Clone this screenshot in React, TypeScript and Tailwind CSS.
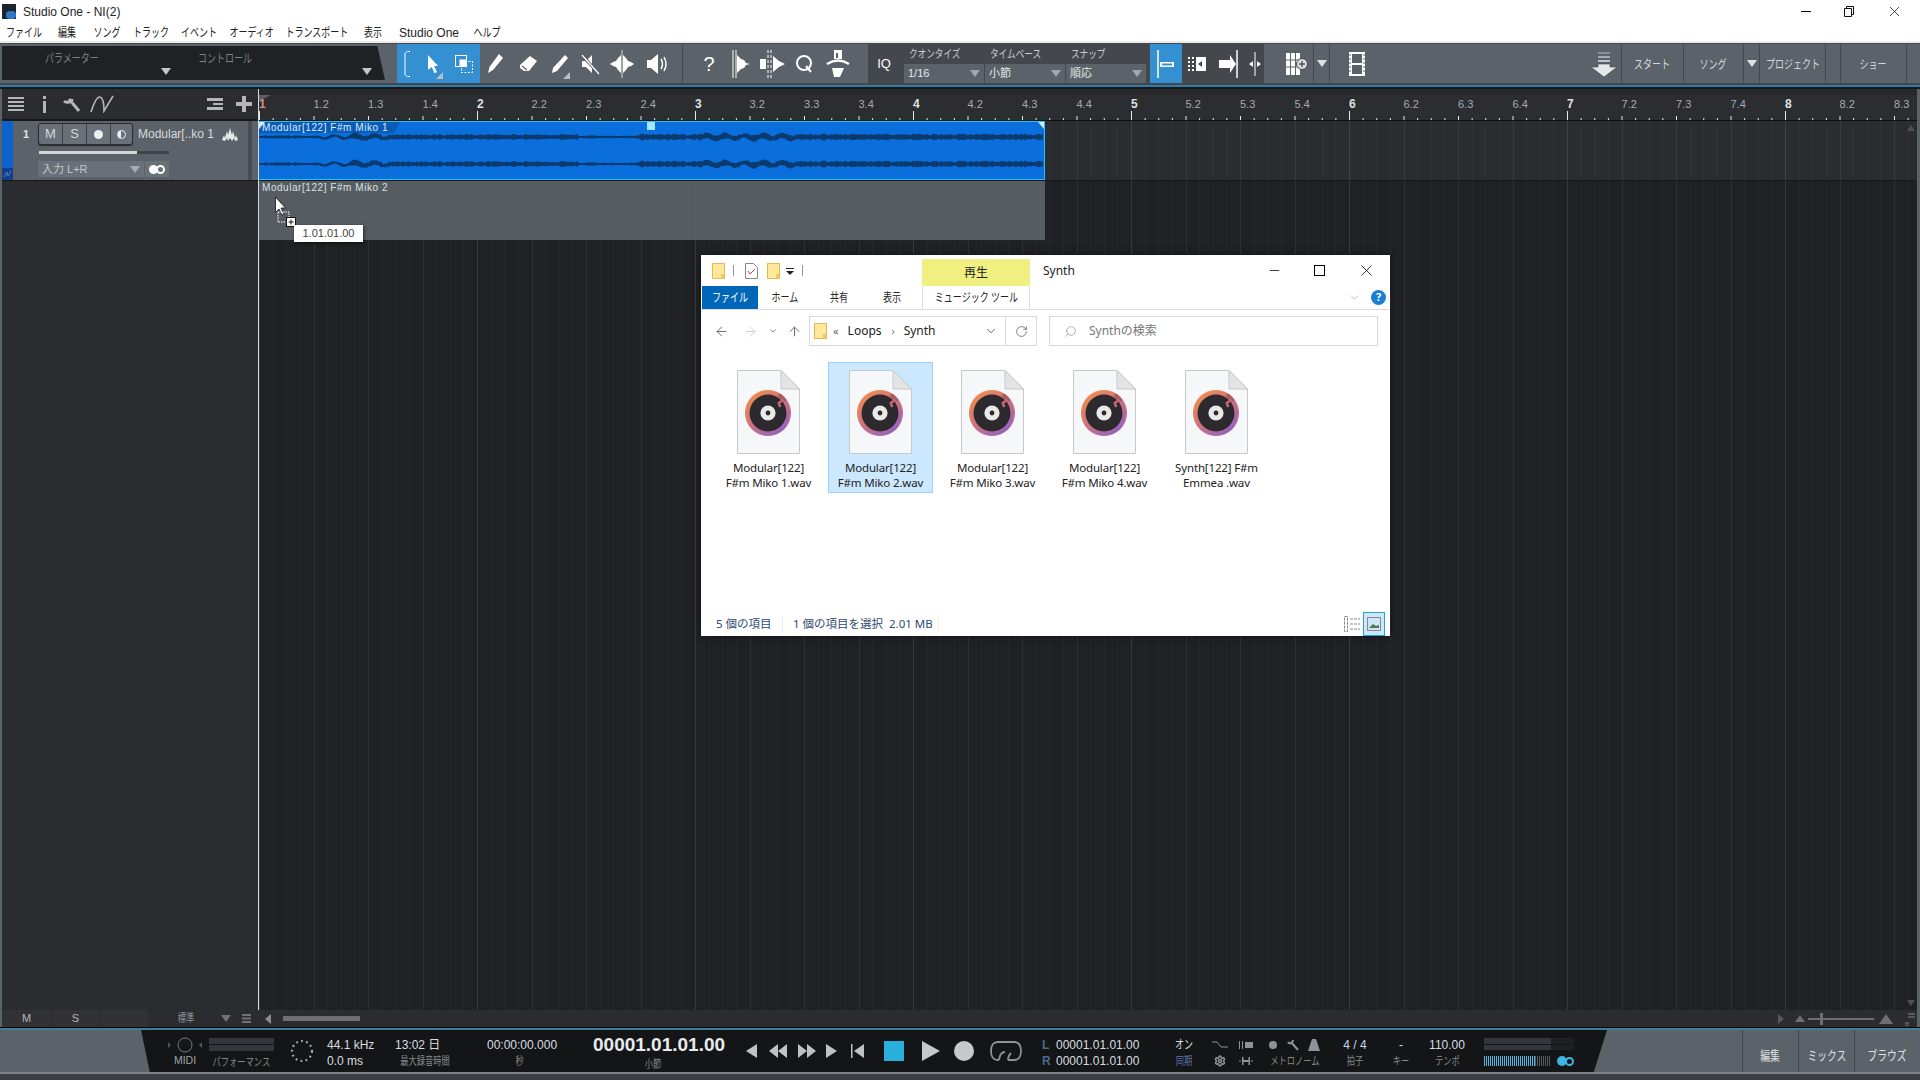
import clsx from 'clsx';
import { ArrowLeft, ArrowRight, ArrowUp, ChevronDown, RotateCw, Search, Minus, Settings, X } from 'lucide-react';

const menus = [
  ['ファイル', 'w-[34px]'],
  ['編集', 'w-[24px]'],
  ['ソング', 'w-[27px]'],
  ['トラック', 'w-[33px]'],
  ['イベント', 'w-[36px]'],
  ['オーディオ', 'w-[42px]'],
  ['トランスポート', 'w-[60px]'],
  ['表示', 'w-[24px]'],
];

const files = [
  ['Modular[122]', 'F#m Miko 1.wav'],
  ['Modular[122]', 'F#m Miko 2.wav'],
  ['Modular[122]', 'F#m Miko 3.wav'],
  ['Modular[122]', 'F#m Miko 4.wav'],
  ['Synth[122] F#m', 'Emmea .wav'],
];

const rulerCells: string[] = [];
for (let bar = 1; bar <= 8; bar++) {
  for (let beat = 1; beat <= 4; beat++) {
    if (bar === 8 && beat === 4) continue;
    rulerCells.push(beat === 1 ? String(bar) : `${bar}.${beat}`);
  }
}

// rough stand-in for the audio, two bands of noise
function wavePath(cy: number) {
  const top: string[] = [];
  const bottom: string[] = [];
  for (let x = 0; x <= 785; x += 2) {
    let env = 1;
    if (x > 90 && x < 320) env = 1.8;
    if (x >= 320 && x < 380) env = 1;
    if (x >= 380) env = 2;
    let wobble = 0;
    if (x > 60 && x < 130) wobble = Math.sin(x / 3.2) * 1.5;
    if (x > 440 && x < 540) wobble = Math.sin(x / 3) * 1.5;
    const noise = Math.abs(Math.sin(x * 12.9898) * 43758.5453) % 1;
    const a = env * 0.8 + noise * env * 0.9;
    top.push(`${x},${(cy + wobble - a).toFixed(1)}`);
    bottom.unshift(`${x},${(cy + wobble + a).toFixed(1)}`);
  }
  return `M${top.join('L')}L${bottom.join('L')}Z`;
}

function Cond({ text, className }: { text: string; className?: string }) {
  return (
    <div className={clsx('flex justify-center whitespace-nowrap', className)}>
      <span className="inline-block scale-x-75">{text}</span>
    </div>
  );
}

function Tri({ className }: { className?: string }) {
  return (
    <svg width="10" height="7" viewBox="0 0 10 7" className={className}>
      <path d="M0 0h10L5 7z" fill="currentColor" />
    </svg>
  );
}

function Ic({ w = 24, h = 24, children }: { w?: number; h?: number; children: React.ReactNode }) {
  return (
    <svg width={w} height={h} viewBox={`0 0 ${w} ${h}`} fill="#fff">
      {children}
    </svg>
  );
}

function Slot({ className, children }: { className: string; children?: React.ReactNode }) {
  return <div className={clsx('relative flex items-center justify-center h-full shrink-0', className)}>{children}</div>;
}

function Corner() {
  return <span className="absolute right-[4px] bottom-[4px] w-0 h-0 border-l-[7px] border-l-transparent border-b-[7px] border-b-[#b9bec3]" />;
}

function DropBox({ label, value }: { label: string; value: string }) {
  return (
    <div className="w-[81px] flex flex-col">
      <div className="h-[20px] pt-[2px] flex items-center text-[11.5px] text-[#c9ccd0] pl-[5px] whitespace-nowrap">
        <span className="inline-block scale-x-75 origin-left">{label}</span>
      </div>
      <div className="h-[19px] mr-[1px] bg-[#5c6269] flex items-center justify-between pl-[4px] pr-[4px] text-[11px] text-[#e6e8ea]">
        <span>{value}</span>
        <Tri className="text-[#a2a7ac]" />
      </div>
    </div>
  );
}

function Disc({ id }: { id: number }) {
  return (
    <svg width="63" height="84" viewBox="0 0 63 84">
      <defs>
        <linearGradient id={`ring${id}`} x1="0.1" y1="0" x2="0.8" y2="1">
          <stop offset="0" stopColor="#f68d45" />
          <stop offset="0.5" stopColor="#d2747a" />
          <stop offset="1" stopColor="#8f5fc4" />
        </linearGradient>
      </defs>
      <path d="M0.5 0.5H44L62.5 19V83.5H0.5Z" fill="#f6f7f9" stroke="#c8c8c8" />
      <path d="M44 0.5V19H62.5Z" fill="#e3e4e6" stroke="#c8c8c8" />
      <circle cx="31" cy="43" r="23" fill={`url(#ring${id})`} />
      <circle cx="31" cy="43" r="18.5" fill="#2c2a2e" />
      <path d="M41.5 24.8A21 21 0 0 1 48.2 31" fill="none" stroke="#a85a60" strokeWidth="3.5" />
      <path d="M46.7 29.7L41.7 33L43.3 37" fill="none" stroke="#c8686f" strokeWidth="2.4" />
      <circle cx="31" cy="43" r="7.6" fill="#e9e9e9" />
      <circle cx="31" cy="43" r="2.4" fill="#2c2a2e" />
    </svg>
  );
}

function Folder() {
  return (
    <svg width="13" height="16" viewBox="0 0 13 16">
      <path d="M0.5 0.5h12v15h-12z" fill="#ffe79b" stroke="#e2b94e" />
      <path d="M9 11h3.5v4.5H9z" fill="#eec766" />
    </svg>
  );
}

function TCol({ className, top, bottom, bottomClass }: { className: string; top: React.ReactNode; bottom: string; bottomClass?: string }) {
  return (
    <div className={clsx('shrink-0 flex flex-col pt-[7px] items-center', className)}>
      <div className="h-[16px] flex items-center text-[12px] text-[#d9dde0] whitespace-nowrap">{top}</div>
      <Cond text={bottom} className={clsx('h-[16px] items-center text-[11px] text-[#85898d]', bottomClass)} />
    </div>
  );
}

export default function App() {
  return (
    <div className="w-[1920px] h-[1080px] overflow-hidden relative flex flex-col bg-[#5c6269] [font-family:'Liberation_Sans','Noto_Sans_CJK_JP',sans-serif]">
      {/* Title + menu */}
      <div className="h-[41px] bg-white shrink-0">
        <div className="h-[23px] flex items-center">
          <div className="w-[14px] h-[15px] ml-[2px] bg-[#1c2430] relative overflow-hidden">
            <span className="absolute left-[4px] top-[7px] w-[10px] h-[8px] rounded-full bg-[#2f78c8]" />
          </div>
          <span className="ml-[7px] text-[12px] text-[#222]">Studio One - NI(2)</span>
          <div className="flex-1" />
          <div className="w-[10px] h-[1px] bg-black mr-[33px]" />
          <svg className="mr-[32px]" width="10" height="11" viewBox="0 0 10 11" fill="none" stroke="#111"><path d="M.5 2.500h7v8h-7zM2.500 2.500v-2h7v8h-2" /></svg>
          <X size={17} strokeWidth={1} className="text-black mr-[17px]" />
        </div>
        <div className="h-[18px] pt-[1px] pl-[7px] flex items-center gap-[14px] text-[12px] text-[#222]">
          {menus.map(([label, w]) => (
            <Cond key={label} text={label} className={w} />
          ))}
          <span className="w-[60px] whitespace-nowrap">Studio One</span>
          <Cond text="ヘルプ" className="w-[28px]" />
        </div>
      </div>
      <div className="h-[2px] bg-[#ececec] shrink-0" />

      {/* Toolbar */}
      <div className="h-[40px] shrink-0 flex bg-[#5c6269] border-t border-[#44484d]">
        <div className="ml-[2px] mt-[2px] h-[34px] w-[383px] shrink-0 flex bg-[#1f2124] text-[#7c8085] text-[12px] [clip-path:polygon(0_0,98%_0,100%_100%,0_100%)]">
          <div className="w-[182px] flex flex-col justify-between pt-[4px] pb-[5px]">
            <Cond text="パラメーター" className="w-[140px]" />
            <Tri className="self-end mr-[13px] text-[#c4c7ca]" />
          </div>
          <div className="w-[201px] flex flex-col justify-between pt-[4px] pb-[5px]">
            <Cond text="コントロール" className="w-[82px]" />
            <Tri className="self-end mr-[13px] text-[#c4c7ca]" />
          </div>
        </div>
        <div className="ml-[12px] w-[83px] shrink-0 flex bg-[#3490d0]">
          <Slot className="w-[22px]">
            <svg width="8" height="26" viewBox="0 0 8 26" fill="none" stroke="#fff"><path d="M6 .500H3L1 2.500v21l2 2h3" /></svg>
          </Slot>
          <Slot className="w-[28px]">
            <Ic w={14} h={20}><path d="M2 1l10 11H8l3 6-2.500 1.200L5.800 13 2 16z" /></Ic>
            <Corner />
          </Slot>
          <Slot className="w-[33px]">
            <svg width="20" height="20" viewBox="0 0 20 20" fill="none" stroke="#fff"><rect x="1.500" y="1.500" width="11" height="11" /><rect x="7.500" y="7.500" width="11" height="11" strokeDasharray="2 1.500" /><rect x="6" y="6" width="6" height="6" fill="#fff" /></svg>
          </Slot>
        </div>
        <Slot className="w-[30px]">
          <Ic w={18} h={22}><path d="M13 1l4 4L7 17l-5 3 1.500-6z" /></Ic>
        </Slot>
        <Slot className="w-[36px]">
          <Ic w={20} h={20}><path d="M12 2l7 5-8 10H6l-4-3v-3z" /><path d="M4 12l5 4" stroke="#5c6269" strokeWidth="1.200" /></Ic>
        </Slot>
        <Slot className="w-[28px]">
          <Ic w={18} h={22}><path d="M14 2l3 3L6 18l-5 2 1-5z" /></Ic>
          <Corner />
        </Slot>
        <Slot className="w-[32px]">
          <Ic w={20} h={22}><path d="M2 8h4l6-6v18l-6-6H2z" /><path d="M1 1l18 20" stroke="#5c6269" strokeWidth="3" /><path d="M2 2l17 19" stroke="#fff" strokeWidth="1.200" /></Ic>
        </Slot>
        <Slot className="w-[32px]">
          <Ic w={26} h={28}>
            <path d="M12 5l-3 3-2 3-3 1-3 2 3 2 3 1 2 3 3 3zM14 5l3 3 2 3 3 1 3 2-3 2-3 1-2 3-3 3z" />
            <path d="M13 0v28" stroke="#5c6269" strokeWidth="1.800" />
            <path d="M13 0v28" stroke="#fff" strokeWidth=".8" />
          </Ic>
        </Slot>
        <Slot className="w-[36px]">
          <Ic w={22} h={22}><path d="M2 7h4l7-6v20l-7-6H2z" /><path d="M16 6q3 5 0 10M19 4q4 7 0 14" fill="none" stroke="#fff" strokeWidth="1.500" /></Ic>
        </Slot>
        <div className="ml-[8px] border-l border-[#44484d]" />
        <Slot className="w-[28px] ml-[12px] text-[20px] text-white">?</Slot>
        <Slot className="w-[36px]">
          <Ic w={20} h={28}><path d="M2 0v28M5 0v28" stroke="#fff" strokeWidth="1" /><path d="M6 5l4 4 3 1 2 3 4 1-4 1-2 3-3 1-4 4z" /></Ic>
        </Slot>
        <Slot className="w-[28px]">
          <Ic w={26} h={28}><path d="M0 9h6v10H0z" /><path d="M8 0v28M11 0v28" stroke="#fff" strokeDasharray="3 2" /><path d="M13 6l6 5 6 3-6 3-6 5z" /></Ic>
        </Slot>
        <Slot className="w-[34px]">
          <svg width="18" height="20" viewBox="0 0 18 20" fill="none" stroke="#fff" strokeWidth="2"><circle cx="9" cy="9" r="7" /><path d="M11 12l5 6" /></svg>
        </Slot>
        <Slot className="w-[34px]">
          <Ic w={24} h={30}><path d="M8 1h8v9H8z" /><path d="M10 4h2v5h-2z" fill="#5c6269" /><path d="M1 15q11-7 22 0" fill="none" stroke="#fff" strokeWidth="2.600" /><path d="M6 19h12l-4 9H8z" /></Ic>
        </Slot>
        <div className="ml-[13px] w-[396px] shrink-0 flex bg-[#44484d]">
          <Slot className="w-[32px] text-[13px] text-white">IQ</Slot>
          <div className="ml-[4px] flex">
            <DropBox label="クオンタイズ" value="1/16" />
            <DropBox label="タイムベース" value="小節" />
            <DropBox label="スナップ" value="順応" />
          </div>
          <Slot className="w-[32px] ml-[3px] bg-[#3490d0]">
            <Ic w={18} h={28}><path d="M1 0v28" stroke="#fff" strokeWidth="1.500" /><path d="M3 12h14v5H3z" /><path d="M5 13.500h10v2H5z" fill="#3490d0" /></Ic>
          </Slot>
          <Slot className="w-[30px]">
            <Ic w={18} h={14}><path d="M0 0h2v2H0zM0 4h2v2H0zM0 8h2v2H0zM0 12h2v2H0zM4 0h2v2H4zM4 4h2v2H4zM4 8h2v2H4zM4 12h2v2H4z" /><path d="M8 0h10v14H8z" /><path d="M14 4v6l-4-3z" fill="#44484d" /></Ic>
          </Slot>
          <Slot className="w-[34px]">
            <Ic w={20} h={28}><path d="M0 10h11V5l6 9-6 9v-5H0z" /><path d="M18 0v28" stroke="#fff" strokeWidth="1.500" /></Ic>
          </Slot>
          <Slot className="w-[18px]">
            <Ic w={12} h={24}><path d="M6 0v24" stroke="#fff" /><path d="M0 12l4-3v6zM12 12l-4-3v6z" /></Ic>
          </Slot>
        </div>
        <Slot className="w-[32px] ml-[17px]">
          <svg width="22" height="22" viewBox="0 0 22 22"><path d="M0 0h14v22H0z" fill="#fff" /><path d="M4.500 0v22M9.500 0v22M0 7h14M0 14h14" stroke="#5c6269" /><circle cx="16" cy="11" r="5.500" fill="#d8dadc" stroke="#44484d" /><path d="M13 11h6M16 8v6" stroke="#222" /></svg>
        </Slot>
        <div className="border-l border-[#44484d]" />
        <Slot className="w-[15px]"><Tri className="text-[#dfe1e3]" /></Slot>
        <div className="border-l border-[#44484d]" />
        <Slot className="w-[54px]">
          <svg width="16" height="24" viewBox="0 0 16 24"><path d="M0 0h16v24H0z" fill="#fff" /><path d="M3 2h10v9H3zM3 13h10v9H3z" fill="#5c6269" /><path d="M1 2v20M15 2v20" stroke="#5c6269" strokeDasharray="2 2" /></svg>
        </Slot>
        <div className="flex-1" />
        <Slot className="w-[34px]">
          <svg width="28" height="26" viewBox="0 0 28 26"><path d="M8 1h12v2H8z" fill="#8d9196" /><path d="M8 5h12v2H8z" fill="#a6aaae" /><path d="M8 9h12v2H8z" fill="#bfc2c5" /><path d="M8 13h12v3h7L14 26 1 16h7z" fill="#e6e7e8" stroke="#44484d" strokeWidth=".6" /></svg>
        </Slot>
        <div className="border-l border-[#44484d]" />
        <Slot className="w-[61px] pt-[2px] text-[12px] text-[#d6d9dc]"><Cond text="スタート" /></Slot>
        <div className="border-l border-[#44484d]" />
        <Slot className="w-[59px] pt-[2px] text-[12px] text-[#d6d9dc]"><Cond text="ソング" /></Slot>
        <div className="border-l border-[#44484d]" />
        <Slot className="w-[15px]"><Tri className="text-[#dfe1e3]" /></Slot>
        <div className="border-l border-[#44484d]" />
        <Slot className="w-[65px] pt-[2px] text-[12px] text-[#d6d9dc]"><Cond text="プロジェクト" /></Slot>
        <div className="border-l border-[#44484d]" />
        <Slot className="w-[14px]" />
        <div className="border-l border-[#44484d]" />
        <Slot className="w-[65px] pt-[2px] text-[12px] text-[#d6d9dc]"><Cond text="ショー" /></Slot>
        <div className="border-l border-[#44484d] w-[14px]" />
      </div>
      <div className="h-[2px] bg-[#44484d] shrink-0" />
      <div className="h-[2px] bg-[#2f7da6] shrink-0" />
      <div className="h-[2px] bg-[#17181a] shrink-0" />

      {/* Arrange */}
      <div className="h-[921px] shrink-0 flex ml-[2px] mr-[3px] bg-[#1f2124]">
        <div className="w-[256px] shrink-0 flex flex-col bg-[#2a2c30]">
          <div className="h-[32px] flex items-center border-b-2 border-[#17181a] text-[#b4b7ba]">
            <svg className="ml-[6px]" width="16" height="14" viewBox="0 0 16 14" fill="#b4b7ba"><path d="M0 0h16v2H0zM0 4h16v2H0zM0 8h16v2H0zM0 12h16v2H0z" /></svg>
            <svg className="ml-[18px]" width="5" height="17" viewBox="0 0 5 17" fill="#b4b7ba"><path d="M1 0h3v3H1zM1 5h3v12H1z" /></svg>
            <svg className="ml-[16px]" width="18" height="17" viewBox="0 0 18 17" fill="none" stroke="#b4b7ba" strokeWidth="3"><path d="M6 3l10 12M1 5q2 2 5 1t3-3" /></svg>
            <svg className="ml-[9px]" width="24" height="18" viewBox="0 0 24 18" fill="none" stroke="#b4b7ba" strokeWidth="1.600"><path d="M1 17Q6 1 10 2t4 14Q17 11 23 1" /></svg>
            <div className="flex-1" />
            <svg width="16" height="14" viewBox="0 0 16 14" fill="#b4b7ba"><path d="M0 1h16v3H0zM6 6h10v2H6zM0 10h16v3H0z" /></svg>
            <svg className="ml-[13px] mr-[6px]" width="16" height="16" viewBox="0 0 16 16" fill="#b4b7ba"><path d="M6 0h4v6h6v4h-6v6H6v-6H0V6h6z" /></svg>
          </div>
          <div className="h-[60px] flex border-b border-[#17181a]">
            <div className="w-[11px] flex flex-col bg-[#0a63cf]">
              <div className="flex-1" />
              <div className="h-[12px] bg-[#14408a] text-[#4f7fc8]">
                <svg width="11" height="12" viewBox="0 0 11 12" fill="none" stroke="currentColor"><path d="M2 9l3-5 1 4 3-5" /></svg>
              </div>
            </div>
            <div className="w-[235px] bg-[#5c6269] relative pt-[2px]">
              <div className="flex items-center h-[22px]">
                <span className="w-[25px] pl-[1px] text-center text-[11px] font-bold text-[#e2e4e6]">1</span>
                <div className="w-[95px] h-[22px] flex rounded-[3px] border border-[#2b2d30] bg-[#6a7077] text-[#d5d8da] text-[13px] shadow-[0_1px_1px_#2b2d30]">
                  <span className="w-[23px] flex items-center justify-center">M</span>
                  <span className="w-[24px] flex items-center justify-center border-l border-[#3e4146]">S</span>
                  <span className="w-[24px] flex items-center justify-center border-l border-[#3e4146]"><span className="w-[9px] h-[9px] rounded-full bg-[#eceeef]" /></span>
                  <span className="flex-1 flex items-center justify-center border-l border-[#3e4146]"><span className="w-[9px] h-[9px] rounded-full bg-[linear-gradient(90deg,#eceeef_50%,#6a7077_50%)] border border-[#eceeef]" /></span>
                </div>
                <span className="ml-[5px] text-[12px] text-[#d8dbdd] whitespace-nowrap">Modular[..ko 1</span>
                <svg className="ml-[8px]" width="16" height="13" viewBox="0 0 16 13" fill="#e6e8e9"><path d="M0 12l2-5 1 3 2-7 1 4 2-7 2 7 1-4 2 7 1-3 2 5-3 1-1-3-2 3-2-3-2 3-1-3-2 3z" /></svg>
              </div>
              <div className="ml-[26px] mt-[6px] w-[130px] h-[3px] bg-[#3f4347]">
                <div className="w-[98px] h-full bg-[#d4d6d8]" />
              </div>
              <div className="ml-[25px] mt-[7px] flex gap-[1px]">
                <div className="w-[106px] h-[16px] bg-[#6a7077] flex items-center justify-between pl-[4px] pr-[4px] text-[11px] text-[#c5c8cb]">
                  <span>入力 L+R</span>
                  <Tri className="text-[#a9adb1]" />
                </div>
                <div className="w-[24px] h-[16px] bg-[#6a7077] flex items-center justify-center">
                  <span className="w-[9px] h-[9px] rounded-full bg-white" />
                  <span className="w-[9px] h-[9px] -ml-[2px] rounded-full border-2 border-white" />
                </div>
              </div>
            </div>
            <div className="flex-1 flex">
              <div className="w-[4px] bg-[#484c51]" />
              <div className="flex-1 bg-[#5c6269]" />
            </div>
          </div>
        </div>

        <div className="flex-1 flex flex-col relative border-l border-[#d6d8da] overflow-hidden">
          {/* Ruler */}
          <div className="h-[32px] shrink-0 relative bg-[#2b2d31] overflow-hidden">
            <div className="h-[6px] bg-[#26282b]" />
            <span className="absolute left-0 top-[6px] w-0 h-0 border-t-[6px] border-t-[#5c6065] border-r-[12px] border-r-transparent" />
            <div className="flex h-[18px] items-center relative">
              {rulerCells.map((c, i) => (
                <span
                  key={c}
                  className={clsx(
                    'shrink-0 w-[54.5px] whitespace-nowrap',
                    i % 4 === 0 ? 'text-[12px] font-bold' : 'text-[11px] text-[#a8abaf]',
                    i === 0 ? 'text-[#d98b8b]' : i % 4 === 0 && 'text-[#dfe1e3]',
                  )}
                >
                  {c}
                </span>
              ))}
            </div>
            <svg className="absolute left-0 bottom-0" width="1660" height="10" stroke="#e8e9ea">
              {Array.from({ length: 122 }, (_, i) => {
                const x = i * 13.625 + 0.5;
                const h = i % 16 === 0 ? 9 : i % 4 === 0 ? 4 : 2;
                return <line key={i} x1={x} x2={x} y1={9 - h} y2={9} />;
              })}
              <line x1="0" x2="1660" y1="9.500" y2="9.500" stroke="#101112" />
            </svg>
          </div>

          {/* Lanes */}
          <div className="flex-1 flex flex-col bg-[repeating-linear-gradient(90deg,#36393d_0,#36393d_1px,transparent_1px,transparent_218px),repeating-linear-gradient(90deg,#2e3034_0,#2e3034_1px,transparent_1px,transparent_54.5px),repeating-linear-gradient(90deg,#26282b_0,#26282b_1px,transparent_1px,transparent_13.625px)]">
            <div className="h-[60px] shrink-0 flex border-b border-[#17181a]">
              <div className="w-[786px] shrink-0 relative bg-[#0a6fdc] border-y border-[#25c3f5] border-r">
                <div className="w-[141px] h-[11px] flex items-center pl-[3px] bg-[#0a5bb6] text-[10px] tracking-[0.55px] text-[#d9ecff] whitespace-nowrap [clip-path:polygon(0_0,100%_0,96%_100%,0_100%)]">
                  Modular[122] F#m Miko 1
                </div>
                <span className="absolute left-0 top-0 w-0 h-0 border-t-[7px] border-t-[#cdeeff] border-r-[6px] border-r-transparent" />
                <span className="absolute left-[388px] top-0 w-[8px] h-[8px] bg-[#a5e6ff]" />
                <span className="absolute right-0 top-0 w-0 h-0 border-t-[7px] border-t-[#cdeeff] border-l-[6px] border-l-transparent" />
                <svg className="absolute left-0 top-0" width="785" height="58">
                  <path d={wavePath(15)} fill="#0b3a6e" />
                  <path d={wavePath(42)} fill="#0b3a6e" />
                </svg>
              </div>
              <div className="flex-1 bg-white/5" />
            </div>
            <div className="w-[786px] h-[59px] shrink-0 bg-[#5a6066]/95 pl-[3px] text-[10px] tracking-[0.55px] text-[#dfe2e4] leading-[14px]">
              Modular[122] F#m Miko 2
            </div>
          </div>

          {/* Scroll arrows */}
          <span className="absolute right-[2px] top-[36px] w-0 h-0 border-x-[4px] border-x-transparent border-b-[6px] border-b-[#4c5054]" />
          <span className="absolute right-[2px] bottom-[4px] w-0 h-0 border-x-[4px] border-x-transparent border-t-[6px] border-t-[#4c5054]" />
        </div>
      </div>

      {/* Arrange footer */}
      <div className="h-[17px] shrink-0 flex items-center ml-[2px] mr-[3px] bg-[#2a2c30] text-[11px] text-[#b4b7ba]">
        <div className="w-[146px] h-full flex items-center bg-[#303236]">
          <span className="w-[49px] text-center">M</span>
          <span className="w-[49px] h-full flex items-center justify-center border-x border-[#26282b]">S</span>
        </div>
        <Cond text="標準" className="w-[76px] text-[#8e9195]" />
        <Tri className="ml-[-3px] text-[#6f7377]" />
        <svg className="ml-[11px]" width="9" height="9" viewBox="0 0 9 9" fill="#6f7377"><path d="M0 0h9v2H0zM0 3.500h9v2H0zM0 7h9v2H0z" /></svg>
        <span className="ml-[14px] w-0 h-0 border-y-[5px] border-y-transparent border-r-[6px] border-r-[#8a8d91]" />
        <div className="ml-[12px] w-[77px] h-[5px] bg-[#6c6f73]" />
        <div className="flex-1" />
        <span className="w-0 h-0 border-y-[5px] border-y-transparent border-l-[6px] border-l-[#55585c]" />
        <span className="ml-[11px] w-0 h-0 border-x-[5px] border-x-transparent border-b-[7px] border-b-[#6c6f73]" />
        <div className="ml-[3px] w-[66px] h-[2px] bg-[#6c6f73] relative">
          <span className="absolute left-[12px] top-[-5px] w-[3px] h-[12px] bg-[#6c6f73]" />
        </div>
        <span className="ml-[5px] w-0 h-0 border-x-[7px] border-x-transparent border-b-[10px] border-b-[#6c6f73]" />
        <svg className="ml-[12px] mr-[2px]" width="10" height="14" viewBox="0 0 10 14" fill="#55585c"><path d="M3 1h7v2H3zM3 4h7v2H3zM0 10h4v2H0zM0 12.500h4V14H0z" /></svg>
      </div>
      <div className="h-[1px] bg-black shrink-0" />
      <div className="h-[2px] bg-[#3d7f9f] shrink-0" />

      {/* Transport */}
      <div className="h-[42px] shrink-0 flex bg-[#5c6269]">
        <div className="ml-[141px] w-[1466px] shrink-0 flex bg-[#141516] [clip-path:polygon(0_0,100%_0,99.1%_100%,0.6%_100%)]">
          <div className="ml-[24px] w-[40px] shrink-0 flex flex-col items-center pt-[7px]">
            <svg width="40" height="16" viewBox="0 0 40 16" fill="none" stroke="#777b80">
              <circle cx="20" cy="8" r="7" />
              <path d="M3 5l3 3-3 3zM37 5l-3 3 3 3z" fill="#4f5357" stroke="none" />
              <path d="M16 8h.1M24 8h.1M20 5h.1M17.500 6h.1M22.500 6h.1" strokeWidth="2" />
            </svg>
            <span className="h-[16px] flex items-center text-[10.5px] text-[#9fa3a7]">MIDI</span>
          </div>
          <div className="ml-[4px] w-[65px] shrink-0 flex flex-col pt-[8px]">
            <div className="h-[6px] bg-[#33363a]" />
            <div className="h-[6px] mt-[1px] bg-[#33363a]" />
            <Cond text="パフォーマンス" className="mt-[4px] h-[14px] items-center text-[11px] text-[#85898d]" />
          </div>
          <div className="ml-[10px] w-[36px] shrink-0 flex items-center justify-center">
            <svg width="24" height="24" viewBox="0 0 24 24" fill="none" stroke="#a9adb1" strokeWidth="2.200" strokeDasharray="1.800 3.300"><circle cx="12" cy="12" r="10" /></svg>
          </div>
          <div className="ml-[7px] w-[68px] shrink-0 flex flex-col pt-[7px] text-[12px] text-[#d9dde0]">
            <div className="h-[16px] flex items-center">44.1 kHz</div>
            <div className="h-[16px] flex items-center">0.0 ms</div>
          </div>
          <TCol className="w-[92px] !items-start" top="13:02 日" bottom="最大録音時間" bottomClass="w-[60px]" />
          <TCol className="w-[106px] !items-start" top="00:00:00.000" bottom="秒" bottomClass="w-[64px]" />
          <div className="w-[140px] shrink-0 flex flex-col pt-[5px]">
            <div className="h-[20px] flex items-center text-[19px] font-bold text-[#e8ebee] whitespace-nowrap">00001.01.01.00</div>
            <Cond text="小節" className="w-[20px] ml-[50px] mt-[2px] h-[14px] items-center text-[11px] text-[#85898d]" />
          </div>

          <div className="ml-[7px] w-[22px] shrink-0 flex items-center justify-center">
            <svg width="11" height="14" viewBox="0 0 11 14" fill="#bfc2c5"><path d="M11 0v14L0 7z" /></svg>
          </div>
          <div className="w-[31px] shrink-0 flex items-center justify-center">
            <svg width="18" height="14" viewBox="0 0 18 14" fill="#bfc2c5"><path d="M9 0v14L0 7zM18 0v14L9 7z" /></svg>
          </div>
          <div className="w-[28px] shrink-0 flex items-center justify-center">
            <svg width="18" height="14" viewBox="0 0 18 14" fill="#bfc2c5"><path d="M0 0v14l9-7zM9 0v14l9-7z" /></svg>
          </div>
          <div className="w-[20px] shrink-0 flex items-center justify-center">
            <svg width="11" height="14" viewBox="0 0 11 14" fill="#bfc2c5"><path d="M0 0v14l11-7z" /></svg>
          </div>
          <div className="w-[32px] shrink-0 flex items-center justify-center">
            <svg width="13" height="14" viewBox="0 0 13 14" fill="#bfc2c5"><path d="M0 0h1.500v14H0zM13 0v14L3 7z" /></svg>
          </div>
          <div className="ml-[11px] w-[20px] h-[20px] mt-[11px] shrink-0 bg-[#2ab0dc]" />
          <div className="ml-[18px] w-[18px] shrink-0 flex items-center">
            <svg width="18" height="20" viewBox="0 0 18 20" fill="#c6c9cb"><path d="M0 0l18 10L0 20z" /></svg>
          </div>
          <div className="ml-[14px] w-[20px] h-[20px] mt-[11px] shrink-0 rounded-full bg-[#c6c9cb]" />
          <div className="ml-[16px] w-[32px] shrink-0 flex items-center">
            <svg width="32" height="20" viewBox="0 0 32 20" fill="none" stroke="#8f9397" strokeWidth="1.800"><path d="M9 19H8Q1 19 1 10t7-9h16q7 0 7 9t-7 9h-6M9 19q1-8 6-8M18 19q0-4 3-7" /></svg>
          </div>

          <div className="ml-[20px] w-[14px] shrink-0 flex flex-col pt-[7px] text-[12px] font-bold text-[#4a6c8e]">
            <div className="h-[16px] flex items-center">L</div>
            <div className="h-[16px] flex items-center">R</div>
          </div>
          <div className="w-[90px] shrink-0 flex flex-col pt-[7px] text-[12px] text-[#d9dde0]">
            <div className="h-[16px] flex items-center">00001.01.01.00</div>
            <div className="h-[16px] flex items-center">00001.01.01.00</div>
          </div>
          <TCol className="ml-[18px] w-[40px]" top={<Cond text="オン" />} bottom="同期" bottomClass="!text-[#5a74b0]" />
          <div className="ml-[3px] w-[52px] shrink-0 grid grid-cols-2 pt-[7px] auto-rows-[16px] place-items-center">
            <svg width="16" height="8" viewBox="0 0 16 8" fill="none" stroke="#8f9397"><path d="M0 1h5l4 5h7" /></svg>
            <svg width="14" height="8" viewBox="0 0 14 8" fill="#8f9397"><path d="M0 0h1v8H0zM3 0h1v8H3zM6 1h8v6H6z" /></svg>
            <Settings size={12} strokeWidth={3} className="text-[#8f9397]" />
            <svg width="14" height="8" viewBox="0 0 14 8" fill="#8f9397"><path d="M0 4h2M12 4h2" stroke="#8f9397" /><path d="M3 0h1.500v8H3zM9.500 0H11v8H9.500zM4 3h6v2H4z" /></svg>
          </div>
          <div className="w-[71px] shrink-0 flex flex-col pt-[7px]">
            <div className="h-[16px] flex items-center justify-between pl-[10px] pr-[10px]">
              <span className="w-[8px] h-[8px] rounded-full bg-[#8f9397]" />
              <svg width="12" height="12" viewBox="0 0 12 12" fill="none" stroke="#8f9397" strokeWidth="2"><path d="M4 3l7 8M1 3q1 2 3 1t2-3" /></svg>
              <svg width="12" height="12" viewBox="0 0 12 12" fill="#8f9397"><path d="M4 0h4l4 12H0z" /></svg>
            </div>
            <Cond text="メトロノーム" className="h-[16px] items-center text-[11px] text-[#85898d]" />
          </div>
          <TCol className="w-[50px]" top={<span className="text-[#c2dcec]">4 / 4</span>} bottom="拍子" />
          <TCol className="w-[42px]" top="-" bottom="キー" />
          <TCol className="w-[50px]" top="110.00" bottom="テンポ" />
          <div className="ml-[12px] w-[90px] shrink-0 flex flex-col pt-[8px]">
            <div className="h-[6px] bg-[linear-gradient(90deg,#33363a_75%,#1e2022_75%)]" />
            <div className="h-[5px] mt-[1px] bg-[linear-gradient(90deg,#33363a_75%,#1e2022_75%)]" />
            <div className="mt-[6px] h-[10px] flex items-center">
              <div className="w-[67px] h-full bg-[repeating-linear-gradient(90deg,#56b6e4_0,#56b6e4_1px,#141516_1px,#141516_2px)]" />
              <div className="w-[15px] -ml-[15px] h-full bg-[repeating-linear-gradient(90deg,#55585c_0,#55585c_1px,#141516_1px,#141516_2px)]" />
              <span className="ml-[7px] w-[10px] h-[10px] rounded-full bg-[#3db4e4]" />
              <span className="-ml-[2px] w-[9px] h-[9px] rounded-full border-2 border-[#3db4e4]" />
            </div>
          </div>
        </div>
        <div className="flex-1 flex justify-end text-[13px] text-[#e0e2e4]">
          <Slot className="w-[56px] pt-[9px] border-l border-[#44484d]"><Cond text="編集" /></Slot>
          <Slot className="w-[56px] pt-[9px] border-l border-[#44484d]"><Cond text="ミックス" /></Slot>
          <Slot className="w-[66px] pt-[9px] border-l border-[#44484d]"><Cond text="ブラウズ" /></Slot>
        </div>
      </div>
      <div className="flex-1 border-t-2 border-[#7e8287] bg-[#3c3f43]" />

      {/* Drag cursor */}
      <svg className="absolute left-[274px] top-[196px]" width="24" height="32" viewBox="0 0 24 32">
        <path d="M1.500 1l10 11H7l3 6-2 1-3-6-3.500 3.500z" fill="#fff" stroke="#111" strokeWidth=".8" />
        <rect x="4" y="16" width="11" height="10" fill="none" stroke="#fff" strokeDasharray="1.500 1" />
        <rect x="12.500" y="21.500" width="9" height="9" fill="#fff" stroke="#111" />
        <path d="M14.500 26h5M17 23.500v5" stroke="#111" />
      </svg>
      <div className="absolute left-[294px] top-[225px] w-[69px] h-[17px] bg-white flex items-center justify-center text-[11px] text-[#444] shadow-[1px_1px_3px_rgba(0,0,0,0.6)]">
        1.01.01.00
      </div>

      {/* Explorer window */}
      <div className="absolute left-[701px] top-[255px] w-[689px] h-[381px] bg-white flex flex-col text-[#222] text-[12px] [font-family:'Noto_Sans','Noto_Sans_CJK_JP',sans-serif] shadow-[0_0_6px_rgba(0,0,0,0.5)]">
        <div className="h-[31px] shrink-0 flex items-center">
          <div className="ml-[11px] flex items-center">
            <Folder />
            <span className="ml-[8px] w-[1px] h-[11px] bg-[#999]" />
            <svg className="ml-[11px]" width="13" height="16" viewBox="0 0 13 16" fill="none"><path d="M.5.500h8l4 4v11H.5z" fill="#fff" stroke="#888" /><path d="M3 8l2 3 5-5" stroke="#e0402a" /></svg>
            <span className="ml-[9px]"><Folder /></span>
            <svg className="ml-[6px]" width="8" height="8" viewBox="0 0 8 8" fill="#222"><path d="M0 1h8v1H0zM0 4h8L4 8z" /></svg>
            <span className="ml-[8px] w-[1px] h-[11px] bg-[#999]" />
          </div>
          <div className="ml-[119px] w-[108px] h-[27px] mt-[4px] bg-[#f0f080] flex items-center justify-center text-[12px]">再生</div>
          <span className="ml-[13px] text-[12px] text-[#222]">Synth</span>
          <div className="flex-1" />
          <Minus size={15} strokeWidth={1.200} className="mr-[32px] text-black" />
          <div className="w-[11px] h-[11px] border border-black mr-[32px]" />
          <X size={19} strokeWidth={1} className="mr-[14px] text-black" />
        </div>
        <div className="h-[23px] shrink-0 flex items-center border-b border-[#dcdcdc] box-content">
          <div className="ml-[1px] w-[56px] h-full bg-[#0067b8] text-white flex items-center justify-center"><Cond text="ファイル" /></div>
          <Cond text="ホーム" className="w-[54px]" />
          <Cond text="共有" className="w-[54px]" />
          <Cond text="表示" className="w-[52px]" />
          <div className="ml-[4px] w-[108px] h-full border-x border-[#dcdcdc] flex items-center justify-center"><Cond text="ミュージック ツール" /></div>
          <div className="flex-1" />
          <ChevronDown size={13} strokeWidth={1} className="text-[#888] mr-[10px]" />
          <span className="w-[15px] h-[15px] mr-[4px] rounded-full bg-[#1b7fd4] text-white text-[11px] font-bold flex items-center justify-center">?</span>
        </div>
        <div className="h-[30px] mt-[6px] shrink-0 flex items-center">
          <ArrowLeft size={15} strokeWidth={1.500} className="ml-[13px] text-[#666]" />
          <ArrowRight size={15} strokeWidth={1.500} className="ml-[14px] text-[#ccc]" />
          <ChevronDown size={10} className="ml-[10px] text-[#666]" />
          <ArrowUp size={15} strokeWidth={1.500} className="ml-[9px] text-[#666]" />
          <div className="ml-[7px] w-[228px] h-full border border-[#d9d9d9] flex items-center">
            <span className="ml-[4px]"><Folder /></span>
            <span className="ml-[6px] text-[#666] text-[11px]">«</span>
            <span className="ml-[9px]">Loops</span>
            <span className="ml-[10px] text-[#777] text-[10px]">›</span>
            <span className="ml-[9px]">Synth</span>
            <div className="flex-1" />
            <ChevronDown size={14} strokeWidth={1.500} className="mr-[7px] text-[#555]" />
            <div className="w-[31px] h-full border-l border-[#d9d9d9] flex items-center justify-center">
              <RotateCw size={13} strokeWidth={1.500} className="text-[#666]" />
            </div>
          </div>
          <div className="ml-[12px] w-[329px] h-full border border-[#d9d9d9] flex items-center text-[#777]">
            <Search size={13} strokeWidth={1} className="ml-[14px] -scale-x-100" />
            <span className="ml-[12px]">Synthの検索</span>
          </div>
        </div>
        <div className="h-[131px] mt-[16px] ml-[15px] shrink-0 flex gap-[7px]">
          {files.map((f, i) => (
            <div
              key={f[1]}
              className={clsx(
                'w-[105px] h-full shrink-0 flex flex-col items-center pt-[7px] border',
                i === 1 ? 'bg-[#cce8ff] border-[#99d1ff]' : 'border-transparent',
              )}
            >
              <Disc id={i} />
              <div className="mt-[6px] leading-[15px] text-center whitespace-nowrap text-[11.5px] tracking-[-0.15px]">
                <div>{f[0]}</div>
                <div>{f[1]}</div>
              </div>
            </div>
          ))}
        </div>
        <div className="flex-1" />
        <div className="h-[24px] shrink-0 flex items-center text-[11.5px] text-[#2f4a73]">
          <span className="ml-[15px] w-[66px]">5 個の項目</span>
          <span className="w-[1px] h-[14px] bg-[#eee]" />
          <span className="ml-[10px] w-[145px]">1 個の項目を選択&nbsp;&nbsp;2.01 MB</span>
          <span className="w-[1px] h-[14px] bg-[#eee]" />
          <div className="flex-1" />
          <svg className="mr-[3px]" width="16" height="16" viewBox="0 0 16 16" fill="none" stroke="#888"><path d="M.5.500h3v15h-3zM6 3h10M6 8h10M6 13h10" strokeDasharray="3 1" /></svg>
          <div className="w-[22px] h-full mr-[5px] bg-[#cce8ff] border border-[#26a0da] flex items-center justify-center">
            <svg width="14" height="14" viewBox="0 0 14 14"><rect x=".5" y=".5" width="13" height="13" fill="#cfe4f5" stroke="#888" /><path d="M2 11l4-4 3 2 3-1v3H2z" fill="#4d7a52" /></svg>
          </div>
        </div>
      </div>
    </div>
  );
}
